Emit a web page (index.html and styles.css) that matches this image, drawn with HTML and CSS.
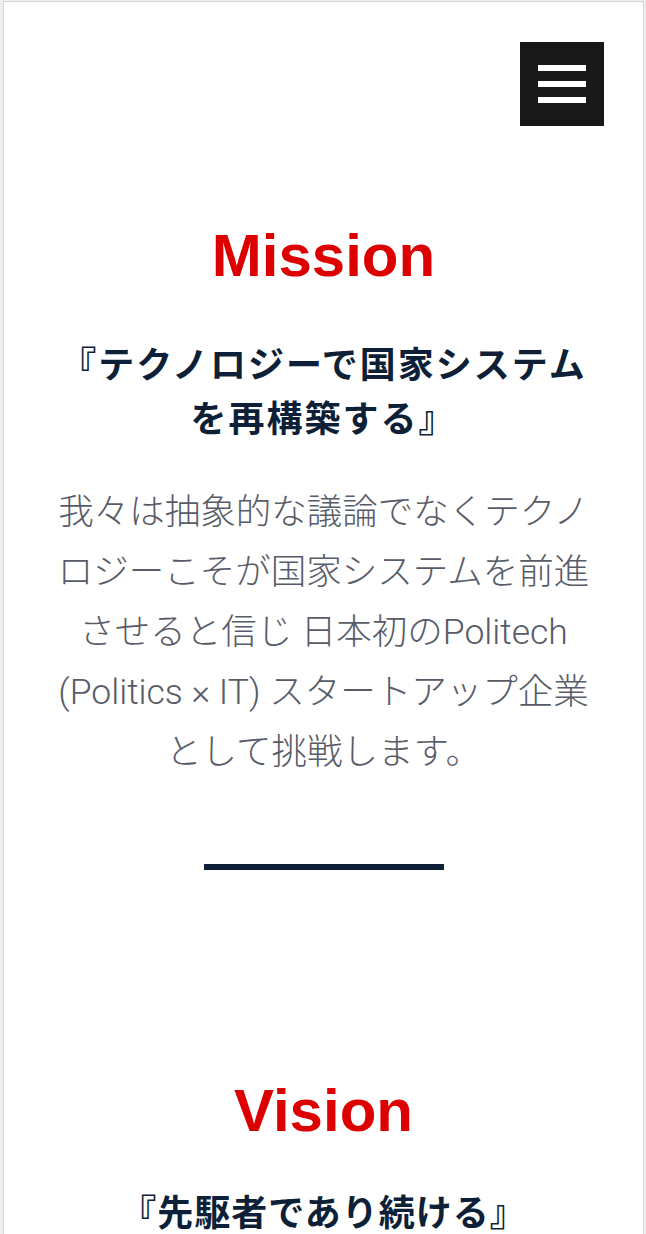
FILE: index.html
```html
<!DOCTYPE html>
<html lang="ja">
<head>
<meta charset="utf-8">
<title>Mission / Vision</title>
<link rel="stylesheet" href="styles.css">
</head>
<body>
<div class="page">
  <header class="header">
    <button class="menu-btn" aria-label="menu">
      <span class="menu-bar"></span>
      <span class="menu-bar"></span>
      <span class="menu-bar"></span>
    </button>
  </header>

  <section class="section mission">
    <h2 class="section-title">Mission</h2>
    <h3 class="section-lead">『テクノロジーで国家システムを再構築する』</h3>
    <p class="section-text">我々は抽象的な議論でなくテクノロジーこそが国家システムを前進させると信じ 日本初のPolitech (Politics × IT) スタートアップ企業として挑戦します。</p>
    <div class="divider"></div>
  </section>

  <section class="section vision">
    <h2 class="section-title">Vision</h2>
    <h3 class="section-lead">『先駆者であり続ける』</h3>
  </section>
</div>
</body>
</html>
```

FILE: styles.css
```css
html, body {
  margin: 0;
  padding: 0;
}

body {
  background: #efefef;
  font-family: Roboto, "Noto Sans CJK JP", sans-serif;
}

.page {
  margin: 1px 2px 0 3px;
  border: 1px solid #d4d4d4;
  border-bottom: none;
  background: #ffffff;
}

.header {
  display: flex;
  justify-content: flex-end;
  padding: 40px 39px 0 0;
}

.menu-btn {
  width: 84px;
  height: 84px;
  border: none;
  padding: 0;
  background: #181818;
  display: flex;
  flex-direction: column;
  align-items: center;
  justify-content: center;
  gap: 10px;
  cursor: pointer;
}

.menu-bar {
  display: block;
  width: 48px;
  height: 6px;
  background: #ffffff;
}

.section {
  padding: 0 50px;
  text-align: center;
}

.mission {
  padding-top: 94px;
}

.section-title {
  margin: 0;
  font-family: "Liberation Sans", Arial, sans-serif;
  font-weight: 700;
  font-size: 60px;
  line-height: 72px;
  color: #dd0000;
}

.section-lead {
  margin: 43px 0 0;
  font-family: "Noto Sans CJK JP", sans-serif;
  font-weight: 700;
  font-size: 36px;
  line-height: 54px;
  letter-spacing: 2px;
  color: #0e1f38;
}

.section-text {
  margin: 39px 0 0;
  font-family: Roboto, "Noto Sans CJK JP", sans-serif;
  font-weight: 300;
  font-size: 35.5px;
  line-height: 60px;
  color: #585c68;
}

.divider {
  width: 240px;
  height: 6px;
  margin: 82px auto 0;
  background: #0e1f38;
}

.vision {
  padding-top: 205px;
  padding-bottom: 20px;
}

.vision .section-lead {
  margin-top: 36px;
  letter-spacing: 1px;
}
```
